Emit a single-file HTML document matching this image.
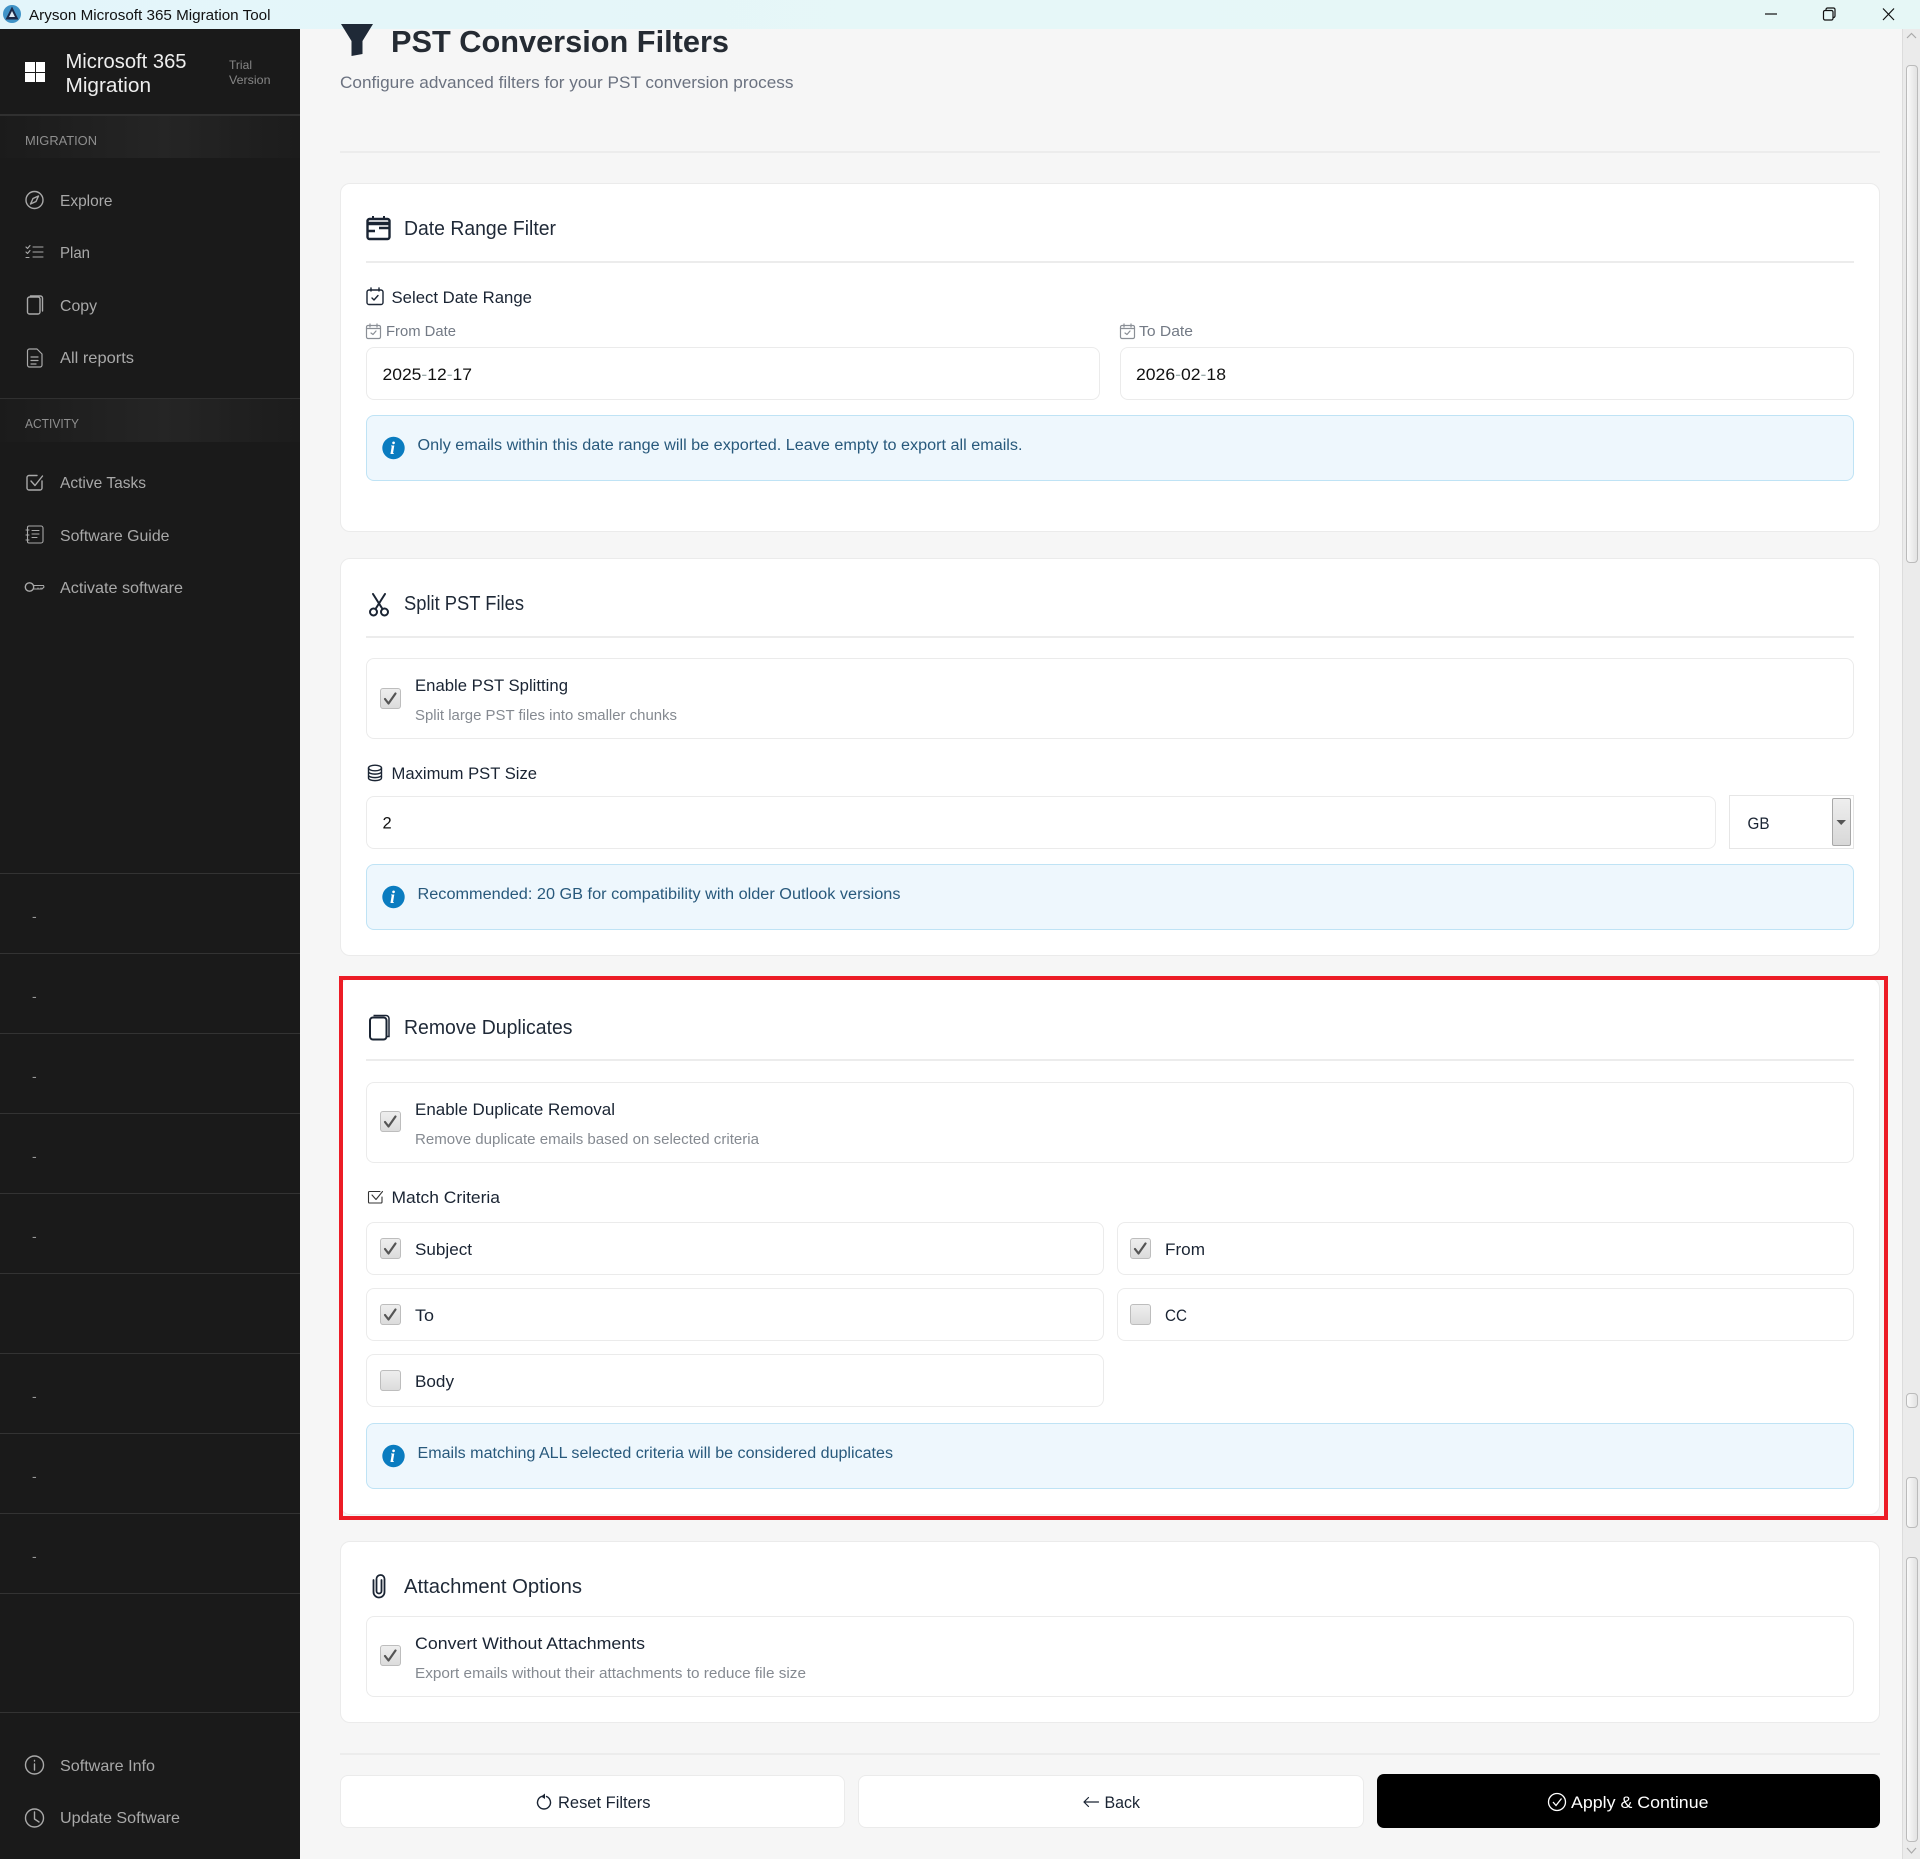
<!DOCTYPE html>
<html lang="en">
<head>
<meta charset="utf-8">
<title>Aryson Microsoft 365 Migration Tool</title>
<style>
html,body{margin:0;padding:0;background:#f6f6f6}
#p{position:relative;width:1920px;height:1859px;overflow:hidden;background:#f6f6f6;font-family:"Liberation Sans",sans-serif}
#p div{position:absolute;box-sizing:border-box}
.tb{left:0;top:0;width:1920px;height:29px;background:linear-gradient(90deg,#e3f5fa,#e6f7f8 50%,#e6f7f6)}
.sb{left:0;top:29px;width:300px;height:1830px;background:#1a1a1a}
.ln{left:0;width:300px;height:1px;background:#333}
.band{left:0;width:300px;height:43px;background:linear-gradient(90deg,#1b1b1b,#252525 55%,#1c1c1c)}
.hr{height:2px;background:#ececec}
.card{background:#fff;border:1px solid #ebebeb;border-radius:10px}
.row{background:#fff;border:1px solid #ebebeb;border-radius:8px}
.info{background:#eef7fd;border:1px solid #bfe3f5;border-radius:8px}
.cb{width:21px;height:21px;background:linear-gradient(#eee,#dcdcdc);border:1px solid #bdbdbd;border-radius:3px}
.th{left:1906px;width:12px;background:linear-gradient(90deg,#fafafa,#e2e2e2);border:1px solid #bbb;border-radius:4px}
svg{position:absolute;left:0;top:0}
text{font-family:"Liberation Sans",sans-serif}
.nav{font-size:16px;fill:#a9a9a9}
.sec{font-size:13px;fill:#8f8f8f}
.h{font-size:20px;fill:#1f2937}
.l{font-size:16.5px;fill:#1a2433}
.s{font-size:14.5px;fill:#858a91}
.m{font-size:14.5px;fill:#737a85}
.i{font-size:15.5px;fill:#28597c}
.ii{font-family:"Liberation Serif",serif;font-size:18px;font-weight:bold;font-style:italic;fill:#fff}
.d{fill:none;stroke:#1a2433;stroke-width:2;stroke-linecap:round;stroke-linejoin:round}
.t{fill:none;stroke:#1a2433;stroke-width:1.4;stroke-linecap:round;stroke-linejoin:round}
.g{fill:none;stroke:#8a8f96;stroke-width:1.2;stroke-linecap:round;stroke-linejoin:round}
.w{fill:none;stroke:#a9a9a9;stroke-width:1.4;stroke-linecap:round;stroke-linejoin:round}
.k{fill:none;stroke:#555;stroke-width:2.2;stroke-linecap:round;stroke-linejoin:round}
.dash{font-size:14px;fill:#999}
</style>
</head>
<body>
<div id="p">
<!-- main boxes -->
<div class="hr" style="left:340px;top:151px;width:1540px"></div>
<div class="card" style="left:340px;top:183px;width:1540px;height:349px"></div>
<div class="hr" style="left:366px;top:261px;width:1488px"></div>
<div class="row" style="left:366px;top:347px;width:734px;height:53px"></div>
<div class="row" style="left:1120px;top:347px;width:734px;height:53px"></div>
<div class="info" style="left:366px;top:415px;width:1488px;height:66px"></div>

<div class="card" style="left:340px;top:558px;width:1540px;height:398px"></div>
<div class="hr" style="left:366px;top:636px;width:1488px"></div>
<div class="row" style="left:366px;top:658px;width:1488px;height:81px"></div>
<div class="cb" style="left:380px;top:688px"></div>
<div class="row" style="left:366px;top:796px;width:1350px;height:53px"></div>
<div style="left:1729px;top:795px;width:125px;height:54px;background:#fff;border:1px solid #e6e6e6"></div>
<div style="left:1832px;top:798px;width:19px;height:48px;background:linear-gradient(#eee,#d8d8d8);border:1px solid #a8a8a8;border-radius:2px"></div>
<div class="info" style="left:366px;top:864px;width:1488px;height:66px"></div>

<div class="card" style="left:340px;top:978px;width:1540px;height:537px"></div>
<div style="left:339px;top:976px;width:1549px;height:544px;border:4px solid #ec1c26"></div>
<div class="hr" style="left:366px;top:1059px;width:1488px"></div>
<div class="row" style="left:366px;top:1082px;width:1488px;height:81px"></div>
<div class="cb" style="left:380px;top:1111px"></div>
<div class="row" style="left:366px;top:1222px;width:738px;height:53px"></div>
<div class="cb" style="left:380px;top:1238px"></div>
<div class="row" style="left:1117px;top:1222px;width:737px;height:53px"></div>
<div class="cb" style="left:1130px;top:1238px"></div>
<div class="row" style="left:366px;top:1288px;width:738px;height:53px"></div>
<div class="cb" style="left:380px;top:1304px"></div>
<div class="row" style="left:1117px;top:1288px;width:737px;height:53px"></div>
<div class="cb" style="left:1130px;top:1304px"></div>
<div class="row" style="left:366px;top:1354px;width:738px;height:53px"></div>
<div class="cb" style="left:380px;top:1370px"></div>
<div class="info" style="left:366px;top:1423px;width:1488px;height:66px"></div>

<div class="card" style="left:340px;top:1541px;width:1540px;height:182px"></div>
<div class="row" style="left:366px;top:1616px;width:1488px;height:81px"></div>
<div class="cb" style="left:380px;top:1645px"></div>
<div class="hr" style="left:340px;top:1753px;width:1540px"></div>
<div class="row" style="left:340px;top:1775px;width:505px;height:53px"></div>
<div class="row" style="left:858px;top:1775px;width:506px;height:53px"></div>
<div style="left:1377px;top:1774px;width:503px;height:54px;background:#000;border-radius:7px"></div>

<!-- sidebar -->
<div class="sb"></div>
<div class="band" style="top:115px"></div>
<div class="band" style="top:399px"></div>
<div class="ln" style="top:114px;height:2px;background:#303030"></div>
<div class="ln" style="top:398px;background:#303030"></div>
<div class="ln" style="top:873px"></div><div class="ln" style="top:953px"></div>
<div class="ln" style="top:1033px"></div><div class="ln" style="top:1113px"></div>
<div class="ln" style="top:1193px"></div><div class="ln" style="top:1273px"></div>
<div class="ln" style="top:1353px"></div><div class="ln" style="top:1433px"></div>
<div class="ln" style="top:1513px"></div><div class="ln" style="top:1593px"></div>
<div class="ln" style="top:1712px"></div>
<div style="left:25px;top:62px;width:9.5px;height:9.5px;background:#fff"></div>
<div style="left:35.5px;top:62px;width:9.5px;height:9.5px;background:#fff"></div>
<div style="left:25px;top:72.5px;width:9.5px;height:9.5px;background:#fff"></div>
<div style="left:35.5px;top:72.5px;width:9.5px;height:9.5px;background:#fff"></div>

<!-- title bar & scrollbar -->
<div class="tb"></div>
<div style="left:1902px;top:29px;width:18px;height:1830px;background:#ebebeb;border-left:1px solid #dcdcdc"></div>
<div class="th" style="top:65px;height:498px"></div>
<div class="th" style="top:1393px;height:15px"></div>
<div class="th" style="top:1477px;height:51px"></div>
<div class="th" style="top:1557px;height:285px"></div>

<svg width="1920" height="1859" viewBox="0 0 1920 1859" xmlns="http://www.w3.org/2000/svg">
<!-- title bar -->
<circle cx="12" cy="14" r="9" fill="#3f93c7"/>
<path d="M12 6.5 L18.5 19.5 H5.5 Z" fill="#1c2b4a"/>
<path d="M12 11 L15 17 H9 Z" fill="#dfeaf3"/>
<text x="29" y="20" font-size="15" fill="#111" textLength="241.5" lengthAdjust="spacingAndGlyphs">Aryson Microsoft 365 Migration Tool</text>
<path d="M1765 14 H1777" stroke="#111" stroke-width="1.2" fill="none"/>
<rect x="1823.5" y="10.5" width="9.5" height="9.5" rx="1.5" fill="none" stroke="#111" stroke-width="1.2"/>
<path d="M1826 10 V9.5 a1.5 1.5 0 0 1 1.5-1.5 H1833.5 a1.5 1.5 0 0 1 1.5 1.5 V16 a1.5 1.5 0 0 1-1.5 1.5" fill="none" stroke="#111" stroke-width="1.2"/>
<path d="M1883 8.5 L1894 20 M1894 8.5 L1883 20" stroke="#111" stroke-width="1.2" fill="none"/>
<path d="M1907 38 L1911.5 33.5 L1916 38" fill="none" stroke="#aaa" stroke-width="1.2"/>
<path d="M1907 1848 L1911.5 1853 L1916 1848" fill="none" stroke="#aaa" stroke-width="1.2"/>

<!-- sidebar text -->
<text x="65.5" y="68" font-size="20.5" fill="#eee" textLength="121" lengthAdjust="spacingAndGlyphs">Microsoft 365</text>
<text x="65.5" y="92" font-size="20.5" fill="#eee" textLength="85.5" lengthAdjust="spacingAndGlyphs">Migration</text>
<text x="229" y="69" font-size="12" fill="#868686" textLength="23" lengthAdjust="spacingAndGlyphs">Trial</text>
<text x="229" y="84" font-size="12" fill="#868686" textLength="41.5" lengthAdjust="spacingAndGlyphs">Version</text>
<text class="sec" x="25" y="145" textLength="72" lengthAdjust="spacingAndGlyphs">MIGRATION</text>
<text class="sec" x="25" y="428" textLength="54" lengthAdjust="spacingAndGlyphs">ACTIVITY</text>
<text class="nav" x="60" y="206" textLength="52.5" lengthAdjust="spacingAndGlyphs">Explore</text>
<text class="nav" x="60" y="258" textLength="30" lengthAdjust="spacingAndGlyphs">Plan</text>
<text class="nav" x="60" y="311" textLength="37" lengthAdjust="spacingAndGlyphs">Copy</text>
<text class="nav" x="60" y="363" textLength="74" lengthAdjust="spacingAndGlyphs">All reports</text>
<text class="nav" x="60" y="488" textLength="86" lengthAdjust="spacingAndGlyphs">Active Tasks</text>
<text class="nav" x="60" y="541" textLength="109.5" lengthAdjust="spacingAndGlyphs">Software Guide</text>
<text class="nav" x="60" y="593" textLength="123" lengthAdjust="spacingAndGlyphs">Activate software</text>
<text class="nav" x="60" y="1771" textLength="95" lengthAdjust="spacingAndGlyphs">Software Info</text>
<text class="nav" x="60" y="1823" textLength="120" lengthAdjust="spacingAndGlyphs">Update Software</text>
<text class="dash" x="32" y="921">-</text>
<text class="dash" x="32" y="1001">-</text>
<text class="dash" x="32" y="1081">-</text>
<text class="dash" x="32" y="1161">-</text>
<text class="dash" x="32" y="1241">-</text>
<text class="dash" x="32" y="1401">-</text>
<text class="dash" x="32" y="1481">-</text>
<text class="dash" x="32" y="1561">-</text>

<!-- sidebar icons -->
<circle class="w" cx="34.5" cy="200" r="8.5"/><path class="w" d="M38.5 196 L36 201.5 L30.5 204 L33 198.5 Z"/>
<path class="w" style="stroke-width:1.1" d="M33 247 H43 M33 252 H43 M33 257 H43 M26 247 l1.5 1.5 l2.5-3 M26 252 l1.5 1.5 l2.5-3 M26 257.5 h3"/>
<rect class="w" x="27.5" y="297" width="12.5" height="17" rx="2"/><path class="w" d="M30.5 296 H40.5 a2 2 0 0 1 2 2 V311"/>
<path class="w" style="stroke-width:1.2" d="M29.5 349 H37 L42 354 V365 a2 2 0 0 1-2 2 H29.5 a2 2 0 0 1-2-2 V351 a2 2 0 0 1 2-2 Z M31 357 H38 M31 360.5 H38 M31 364 H36"/>
<path class="w" d="M37 475.5 H29 a2 2 0 0 0-2 2 V488 a2 2 0 0 0 2 2 H40 a2 2 0 0 0 2-2 V481 M31 481 l4 4.5 L42.5 476"/>
<path class="w" style="stroke-width:1.1" d="M29 526 H41 a2 2 0 0 1 2 2 V541 a2 2 0 0 1-2 2 H29 a1.5 1.5 0 0 1-1.5-1.5 V527.5 A1.5 1.5 0 0 1 29 526 Z M32 530.5 H39 M32 534 H39 M32 537.5 H37 M26 530 h3 M26 535 h3 M26 540 h3"/>
<circle class="w" cx="29.5" cy="587" r="4.2"/><path class="w" style="stroke-width:1.1" d="M33.5 585.5 H43.5 L44 587 L42 589 H34 M38 589 v-1 M41 589 v-1"/>
<circle class="w" cx="34.5" cy="1765" r="9"/><path class="w" d="M34.5 1760.5 v.5 M34.5 1764 V1770"/>
<circle class="w" cx="34.5" cy="1818" r="9"/><path class="w" d="M34.5 1812 V1819 L39 1822"/>

<!-- header -->
<path d="M341 24 H373 L362.5 41 V54 L351.5 56 V41 Z" fill="#1f2937" />
<text x="391" y="52" font-size="30.5" font-weight="bold" fill="#252b33" textLength="338" lengthAdjust="spacingAndGlyphs">PST Conversion Filters</text>
<text x="340" y="88" font-size="16.5" fill="#6b7280" textLength="453.5" lengthAdjust="spacingAndGlyphs">Configure advanced filters for your PST conversion process</text>

<!-- card 1 -->
<rect x="367.5" y="219" width="22" height="20" rx="2" fill="none" stroke="#1a2433" stroke-width="2.4"/>
<path d="M367.5 223.5 H389.5" stroke="#1a2433" stroke-width="3.5"/>
<path d="M373 216 V219 M384 216 V219" stroke="#1a2433" stroke-width="2"/>
<path d="M367.5 231 H375 M379 228 H390" stroke="#1a2433" stroke-width="2.4"/>
<text class="h" x="404" y="235" textLength="152" lengthAdjust="spacingAndGlyphs">Date Range Filter</text>
<rect class="t" x="367" y="290" width="16" height="14.5" rx="2"/><path class="t" d="M371 288 V291 M379 288 V291 M372 298 l2 2 l4-4.5"/>
<text class="l" x="391.5" y="303" textLength="140.5" lengthAdjust="spacingAndGlyphs">Select Date Range</text>
<rect class="g" x="366.5" y="325.5" width="14" height="13" rx="1.5"/><path class="g" d="M370 324 V327 M377 324 V327 M366.5 328.5 H380.5 M371 333 l2 1.5 l3-3.5"/>
<text class="m" x="386" y="336" textLength="70" lengthAdjust="spacingAndGlyphs">From Date</text>
<rect class="g" x="1120.5" y="325.5" width="14" height="13" rx="1.5"/><path class="g" d="M1124 324 V327 M1131 324 V327 M1120.5 328.5 H1134.5 M1125 333 l2 1.5 l3-3.5"/>
<text class="m" x="1139" y="336" textLength="54" lengthAdjust="spacingAndGlyphs">To Date</text>
<text x="382.5" y="380" font-size="16.5" fill="#111" textLength="89.5" lengthAdjust="spacingAndGlyphs">2025<tspan fill="#9aa">-</tspan>12<tspan fill="#9aa">-</tspan>17</text>
<text x="1136" y="380" font-size="16.5" fill="#111" textLength="90" lengthAdjust="spacingAndGlyphs">2026<tspan fill="#9aa">-</tspan>02<tspan fill="#9aa">-</tspan>18</text>
<circle cx="393.5" cy="448" r="11.2" fill="#0a7cc0"/><text class="ii" x="390" y="454">i</text>
<text class="i" x="417.5" y="450" textLength="605" lengthAdjust="spacingAndGlyphs">Only emails within this date range will be exported. Leave empty to export all emails.</text>

<!-- card 2 -->
<circle class="d" cx="373.5" cy="612" r="3.5"/><circle class="d" cx="384.5" cy="612" r="3.5"/>
<path class="d" d="M375.5 609 L385 594 M382.5 609 L373 594"/>
<text class="h" x="404" y="610" textLength="120" lengthAdjust="spacingAndGlyphs">Split PST Files</text>
<path class="k" d="M385 699 l3.5 4.5 l7-10"/>
<text class="l" x="415" y="691" textLength="153" lengthAdjust="spacingAndGlyphs">Enable PST Splitting</text>
<text class="s" x="415" y="720" textLength="262" lengthAdjust="spacingAndGlyphs">Split large PST files into smaller chunks</text>
<ellipse class="t" cx="375" cy="768" rx="6.5" ry="2.8"/><path class="t" d="M368.5 768 V778 c0 3.5 13 3.5 13 0 V768 M368.5 771.5 c0 3.5 13 3.5 13 0 M368.5 775 c0 3.5 13 3.5 13 0"/>
<text class="l" x="391.5" y="779" textLength="145.5" lengthAdjust="spacingAndGlyphs">Maximum PST Size</text>
<text x="382.5" y="828.5" font-size="16.5" fill="#111">2</text>
<text x="1747.5" y="829" font-size="17" fill="#1a2433" textLength="22" lengthAdjust="spacingAndGlyphs">GB</text>
<path d="M1836.5 820 H1846 L1841.2 825 Z" fill="#555"/>
<circle cx="393.5" cy="897" r="11.2" fill="#0a7cc0"/><text class="ii" x="390" y="903">i</text>
<text class="i" x="417.5" y="899" textLength="483" lengthAdjust="spacingAndGlyphs">Recommended: 20 GB for compatibility with older Outlook versions</text>

<!-- card 3 -->
<rect class="d" x="370" y="1017.5" width="16.5" height="22" rx="3"/>
<path d="M373.5 1015.5 H386 a3 3 0 0 1 3 3 V1036.5 H387" fill="none" stroke="#1a2433" stroke-width="1.5"/>
<text class="h" x="404" y="1034" textLength="168.5" lengthAdjust="spacingAndGlyphs">Remove Duplicates</text>
<path class="k" d="M385 1122 l3.5 4.5 l7-10"/>
<text class="l" x="415" y="1115" textLength="200" lengthAdjust="spacingAndGlyphs">Enable Duplicate Removal</text>
<text class="s" x="415" y="1144" textLength="344" lengthAdjust="spacingAndGlyphs">Remove duplicate emails based on selected criteria</text>
<path class="t" style="stroke-width:1.1;stroke:#333" d="M380 1191.5 H369.5 a1 1 0 0 0-1 1 V1202 a1 1 0 0 0 1 1 H381 a1 1 0 0 0 1-1 V1197 M372 1195 l4 4.5 l6.5-8"/>
<text class="l" x="391.5" y="1203" textLength="108.5" lengthAdjust="spacingAndGlyphs">Match Criteria</text>
<path class="k" d="M385 1249 l3.5 4.5 l7-10"/>
<text class="l" x="415" y="1255" textLength="57" lengthAdjust="spacingAndGlyphs">Subject</text>
<path class="k" d="M1135 1249 l3.5 4.5 l7-10"/>
<text class="l" x="1165" y="1255" textLength="40" lengthAdjust="spacingAndGlyphs">From</text>
<path class="k" d="M385 1315 l3.5 4.5 l7-10"/>
<text class="l" x="415" y="1321" textLength="19" lengthAdjust="spacingAndGlyphs">To</text>
<text class="l" x="1165" y="1321" textLength="22" lengthAdjust="spacingAndGlyphs">CC</text>
<text class="l" x="415" y="1387" textLength="39" lengthAdjust="spacingAndGlyphs">Body</text>
<circle cx="393.5" cy="1456" r="11.2" fill="#0a7cc0"/><text class="ii" x="390" y="1462">i</text>
<text class="i" x="417.5" y="1458" textLength="475.5" lengthAdjust="spacingAndGlyphs">Emails matching ALL selected criteria will be considered duplicates</text>

<!-- card 4 -->
<path class="t" style="stroke-width:1.8" d="M373.5 1580 V1592 a5.5 5.5 0 0 0 11 0 V1579 a4 4 0 0 0-8 0 V1591 a2.5 2.5 0 0 0 5 0 V1580"/>
<text class="h" x="404" y="1593" textLength="178" lengthAdjust="spacingAndGlyphs">Attachment Options</text>
<path class="k" d="M385 1656 l3.5 4.5 l7-10"/>
<text class="l" x="415" y="1649" textLength="230" lengthAdjust="spacingAndGlyphs">Convert Without Attachments</text>
<text class="s" x="415" y="1678" textLength="391" lengthAdjust="spacingAndGlyphs">Export emails without their attachments to reduce file size</text>

<!-- buttons -->
<path class="t" d="M541.5 1796.5 A6.5 6.5 0 1 0 546.5 1796.5"/><path d="M545 1793.5 L541 1796.5 L545 1799 Z" fill="#1a2433"/>
<text class="l" x="558" y="1808" textLength="92.5" lengthAdjust="spacingAndGlyphs">Reset Filters</text>
<path class="t" style="stroke-width:1.2" d="M1098.5 1802 H1084 M1088.5 1797.5 l-4.5 4.5 l4.5 4.5"/>
<text class="l" x="1104.5" y="1808" textLength="35.5" lengthAdjust="spacingAndGlyphs">Back</text>
<circle cx="1557" cy="1802" r="8.5" fill="none" stroke="#fff" stroke-width="1.3"/>
<path d="M1553 1802 l3 3.5 l5.5-7" fill="none" stroke="#fff" stroke-width="1.3"/>
<text x="1571" y="1808" font-size="16.5" fill="#fff" textLength="137.5" lengthAdjust="spacingAndGlyphs">Apply &amp; Continue</text>
</svg>
</div>
</body>
</html>
